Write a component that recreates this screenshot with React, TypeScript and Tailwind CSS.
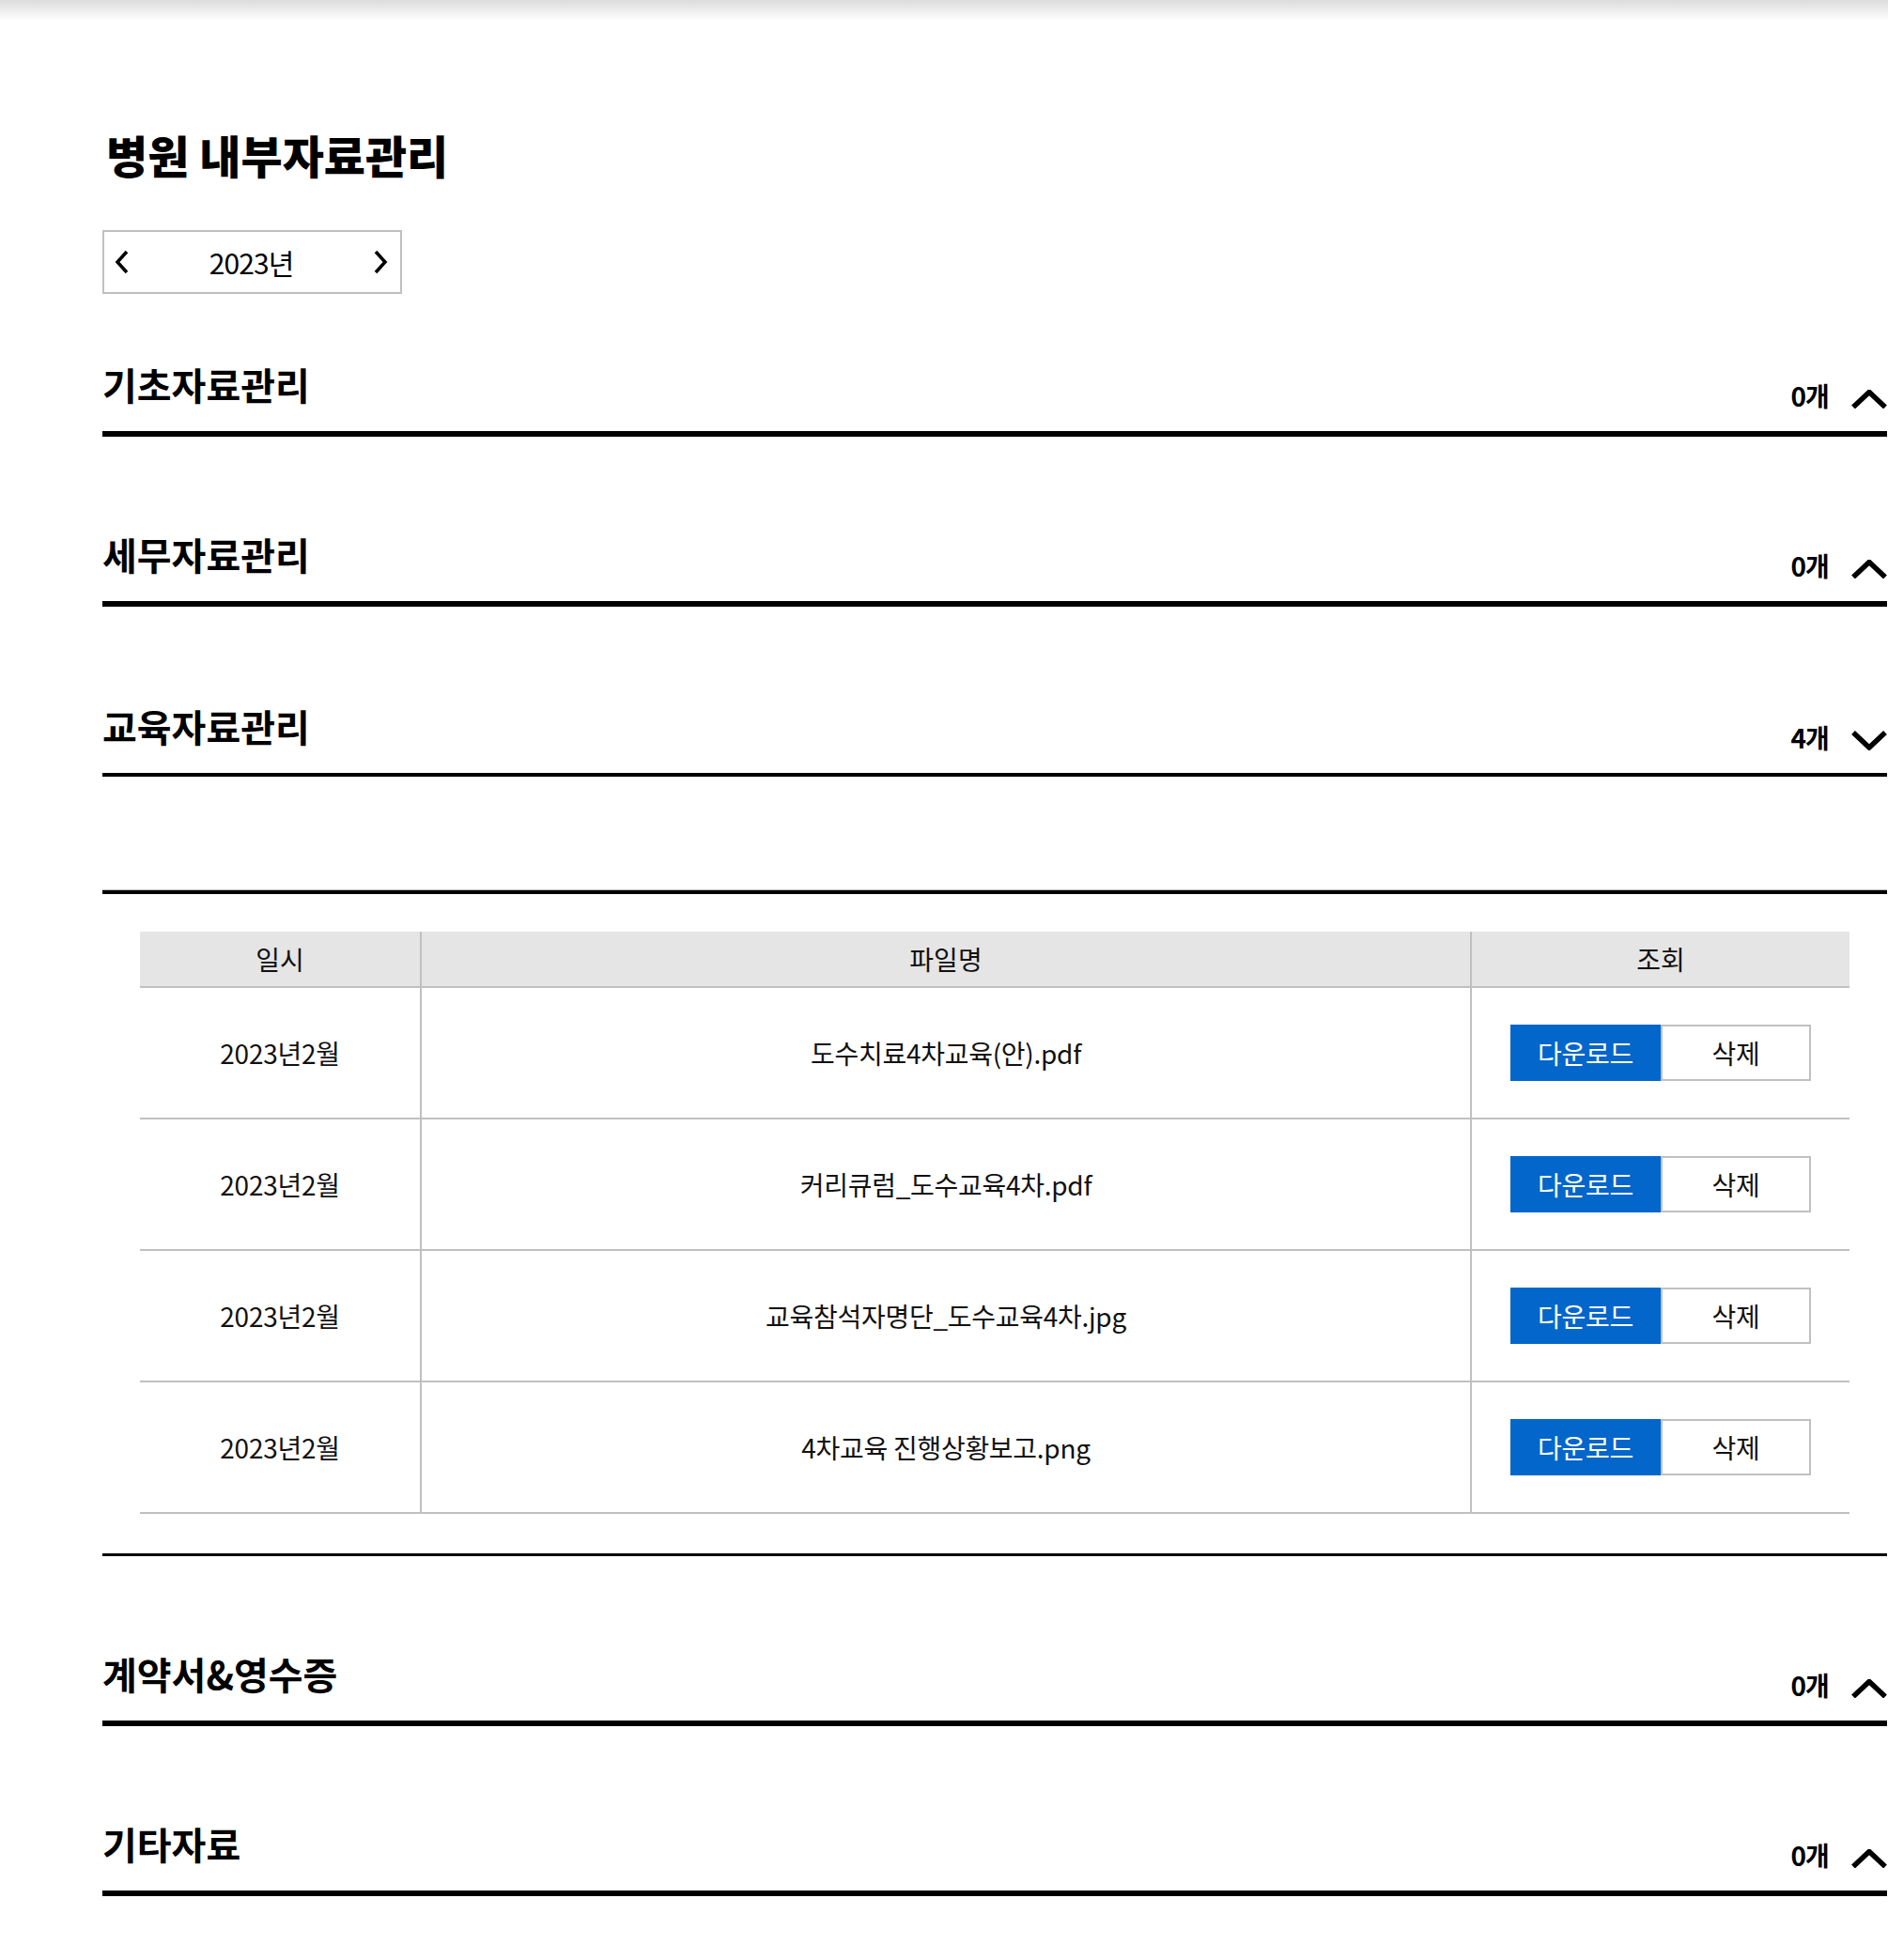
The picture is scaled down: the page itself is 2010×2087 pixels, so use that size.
import React from "react";

type Section = { title: string; count: number; open?: boolean };

const files = [
  { date: "2023년2월", name: "도수치료4차교육(안).pdf" },
  { date: "2023년2월", name: "커리큐럼_도수교육4차.pdf" },
  { date: "2023년2월", name: "교육참석자명단_도수교육4차.jpg" },
  { date: "2023년2월", name: "4차교육 진행상황보고.png" },
];

function ChevronUp() {
  return (
    <svg width="38" height="20" viewBox="0 0 38 20" fill="none">
      <path d="M2 18.5 L19 2.5 L36 18.5" stroke="#000" strokeWidth="5.5" strokeLinejoin="miter" />
    </svg>
  );
}

function ChevronDown() {
  return (
    <svg width="38" height="22" viewBox="0 0 38 22" fill="none">
      <path d="M2 3 L19 19 L36 3" stroke="#000" strokeWidth="5.5" strokeLinejoin="miter" />
    </svg>
  );
}

function SectionHeader({ s, first, thin }: { s: Section; first?: boolean; thin?: boolean }) {
  return (
    <div
      className={`flex items-end justify-between border-black ${
        first ? "h-[152px]" : "h-[181px]"
      } ${thin ? "border-b-4" : "border-b-[6px]"}`}
    >
      <h3 className="mb-[30px] text-[40px] font-bold leading-none text-black">{s.title}</h3>
      <div className="mb-[24px] flex items-end gap-[24px]">
        <span className="text-[28px] font-bold leading-none tracking-[-0.03em] text-black">
          {s.count}개
        </span>
        {s.open ? <ChevronDown /> : <ChevronUp />}
      </div>
    </div>
  );
}

export default function App() {
  return (
    <div className="min-h-screen bg-white font-['Noto_Sans_CJK_KR','Noto_Sans',sans-serif] text-black">
      <div className="h-[22px] w-full bg-linear-to-b from-[#dcdcdc] to-white" />

      <div className="ml-[109px] w-[1900px] pt-[118px] pb-[72px]">
        <h1 className="ml-[4px] text-[48px] font-black leading-none">병원 내부자료관리</h1>

        <div className="mt-[57px] flex h-[68px] w-[319px] items-center justify-between border-2 border-[#c0c0c0] pl-[11px] pr-[13px]">
          <svg width="16" height="26" viewBox="0 0 16 26" fill="none">
            <path d="M13 2 L3 13 L13 24" stroke="#000" strokeWidth="3.5" />
          </svg>
          <span className="text-[30px] leading-none tracking-[-0.03em]">2023년</span>
          <svg width="16" height="26" viewBox="0 0 16 26" fill="none">
            <path d="M3 2 L13 13 L3 24" stroke="#000" strokeWidth="3.5" />
          </svg>
        </div>

        <SectionHeader s={{ title: "기초자료관리", count: 0 }} first />
        <SectionHeader s={{ title: "세무자료관리", count: 0 }} />
        <SectionHeader s={{ title: "교육자료관리", count: 4, open: true }} thin />

        {/* 펼쳐진 교육자료 목록 */}
        <div className="pt-[120px]">
          <div className="h-px bg-[#b5b5b5]" />
          <div className="h-[4px] bg-black" />

          <div className="mx-[40px] mt-[40px]">
            <div className="grid h-[60px] grid-cols-[298px_1120px_1fr] border-b-2 border-[#c0c0c0] bg-[#e5e5e5] text-[28px] leading-none text-[#111]">
              <div className="flex items-center justify-center">일시</div>
              <div className="flex items-center justify-center border-x-2 border-[#c0c0c0]">파일명</div>
              <div className="flex items-center justify-center">조회</div>
            </div>
            {files.map((f, i) => (
              <div
                key={i}
                className="grid h-[140px] grid-cols-[298px_1120px_1fr] border-b-2 border-[#c0c0c0] text-[28px] leading-none tracking-[-0.01em] text-[#111]"
              >
                <div className="flex items-center justify-center">{f.date}</div>
                <div className="flex items-center justify-center border-x-2 border-[#c0c0c0]">{f.name}</div>
                <div className="flex items-center justify-center">
                  <button className="flex h-[60px] w-[160px] items-center justify-center bg-[#0366cb] text-[28px] leading-none text-white">
                    다운로드
                  </button>
                  <button className="flex h-[60px] w-[160px] items-center justify-center border-2 border-[#c0c0c0] bg-white text-[28px] leading-none text-[#111]">
                    삭제
                  </button>
                </div>
              </div>
            ))}
          </div>

          <div className="mt-[42px] h-[3px] bg-black" />
        </div>

        <SectionHeader s={{ title: "계약서&영수증", count: 0 }} />
        <SectionHeader s={{ title: "기타자료", count: 0 }} />
      </div>
    </div>
  );
}
